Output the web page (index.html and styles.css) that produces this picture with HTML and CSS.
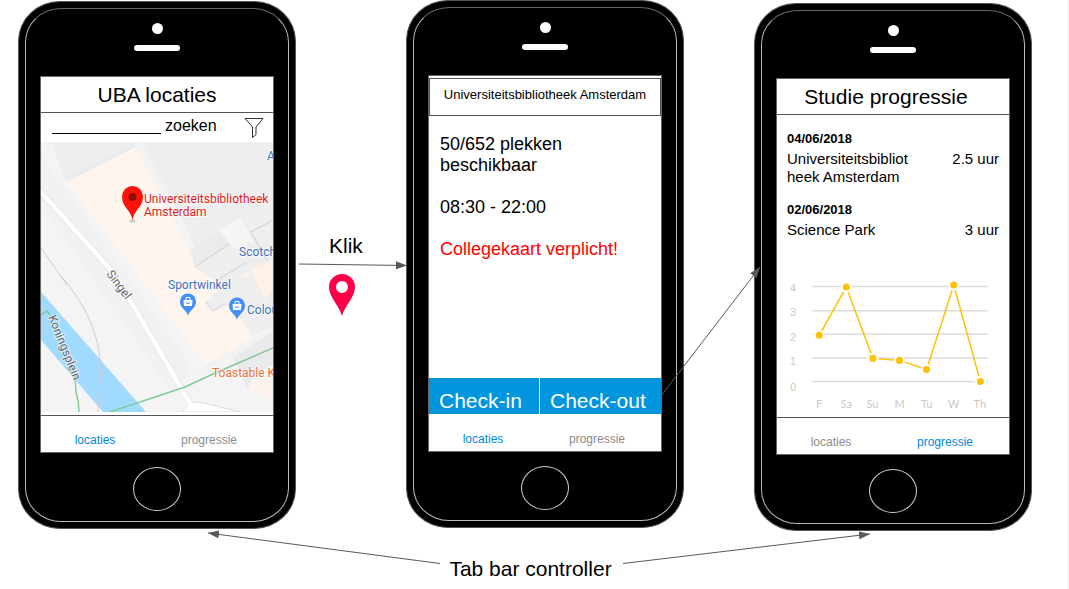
FILE: index.html
```html
<!DOCTYPE html>
<html lang="nl">
<head>
<meta charset="utf-8">
<meta name="viewport" content="width=device-width, initial-scale=1">
<title>UBA locaties – schermen</title>
<link rel="stylesheet" href="styles.css">
</head>
<body>
<main class="board">
  <div class="flow">
    <section class="phone phone-locations">
      <span class="camera"></span>
      <span class="speaker"></span>
      <div class="screen">
        <h2 class="title">UBA locaties</h2>
        <form class="search">
          <input class="search-input" id="zoek" type="text">
          <label class="search-label" for="zoek">zoeken</label>
          <button class="filter" type="button" aria-label="Filter">
            <svg viewBox="0 0 20 22" width="20" height="22"><path d="M1 1.500H19L12 10V17.500L8.500 20.500V10Z"/></svg>
          </button>
        </form>
        <svg class="map" viewBox="0 0 232 270" role="img" aria-label="Kaart">
          <rect width="232" height="270" fill="#f4f4f4"/>
          <path d="M11 0H90L95 5 26 40 22 35Z" fill="#eee"/>
          <path d="M22 36 92 1 95 5 26 40Z" fill="#e9ebee"/>
          <path d="M0 12 149 223 134 254 0 62Z" fill="#f1f1f1"/>
          <path d="M100 0H232V78L154 104 148 92Z" fill="#eee"/>
          <path d="M96 0H101L154 104 149 110 95 5Z" fill="#f3f3f3"/>
          <path d="M149 110 187 87 205 77 232 64V188L154 126Z" fill="#eee"/>
          <path d="M26 40 95 5 149 110 154 126 187 146 206 130 232 155V185L165 223Z" fill="#fef5ee"/>
          <path d="M149 108 178 88 188 101 155 124Z" fill="#eaebed"/>
          <path d="M178 88 200 76 212 100 195 108Z" fill="#f5f5f5"/>
          <path d="M154 125 188 102M210 90 232 78M210 90 226 119M178 137 206 120" fill="none" stroke="#d5d7df" stroke-width="1.300"/>
          <path d="M165 160 188 138 232 128V184L211 194 190 163 173 169Z" fill="#eee"/>
          <path d="M165 160 172 169 184 161" fill="none" stroke="#dfe0e3" stroke-width="2"/>
          <path d="M209 128 232 117V145L225 158Z" fill="#fef1e8"/>
          <path d="M165 223 232 184V206L144 245Z" fill="#f2f2f2"/>
          <path d="M190 226 232 207V270H150L149 245Z" fill="#f4f4f4"/>
          <path d="M192 215 232 190V223L212 232 207 247Z" fill="#eaeaec"/>
          <path d="M207 246 232 222V259Z" fill="#fdf3ee"/>
          <path d="M0 150 105 270H62L0 198Z" fill="#a1daff"/>
          <path d="M0 106 26 143M19 133C43 160 56 188 59 217C61 235 57 252 57 270" fill="none" stroke="#ccc"/>
          <path d="M-2 48 69 127 86 153 149 261" fill="none" stroke="#e4e4e4" stroke-width="6"/>
          <path d="M141 270 149 261 158 260 200 270Z" fill="#fff" stroke="#ddd"/>
          <path d="M-2 48 69 127 86 153 150 263" fill="none" stroke="#fff" stroke-width="4.500"/>
          <path d="M69 270 144 245 172 232 232 206M0 173 6 169 9 173M34 233 35 250C38 260 38 265 38 270" fill="none" stroke="#7fca97" stroke-width="1.400"/>
          <g class="map-street">
            <text transform="translate(65 132) rotate(53)">Singel</text>
            <text transform="translate(7 175) rotate(68)">Koningsplein</text>
          </g>
          <g class="map-place">
            <text x="226" y="18">A</text>
            <text x="198" y="114">Scotch</text>
            <text x="127" y="147">Sportwinkel</text>
            <text x="206" y="172">Colou</text>
          </g>
          <text class="map-food" x="171" y="235">Toastable K</text>
          <g class="map-main"><text x="103" y="61">Universiteitsbibliotheek</text><text x="103" y="74">Amsterdam</text></g>
          <ellipse cx="91.500" cy="79" rx="3" ry="1.500" fill="#ccc"/>
          <path d="M91.500 79C91 68 81 66 81 54.500A10.500 10.500 0 0 1 102 54.500C102 66 92 68 91.500 79Z" fill="#fc1209"/>
          <circle cx="91.500" cy="55" r="4" fill="#970b06"/>
          <g id="shop">
            <path d="M147 174C146 168 139 167 139 159.500A8 8 0 0 1 155 159.500C155 167 148 168 147 174Z" fill="#4290f8"/>
            <path d="M142.500 158H151.500L151 164H143Z" fill="#fff"/>
            <path d="M145 158V155.500H149V158" fill="none" stroke="#fff"/>
            <path d="M145 160.500Q147 163 149 160.500" fill="none" stroke="#4290f8"/>
          </g>
          <use href="#shop" x="49" y="4"/>
        </svg>
        <nav class="tabs">
          <a class="tab tab-active" href="#locaties">locaties</a>
          <a class="tab" href="#progressie">progressie</a>
        </nav>
      </div>
      <button class="home" type="button" aria-label="Home"></button>
    </section>

    <div class="step">
      <span class="step-text">Klik</span>
      <svg class="step-pin" viewBox="0 0 26 42" width="26" height="42"><path fill-rule="evenodd" d="M13 42C10 31 0 23 0 13A13 13 0 0 1 26 13C26 23 16 31 13 42ZM13 7A6 6 0 1 0 13 19A6 6 0 1 0 13 7Z" fill="#ff0048"/></svg>
    </div>

    <section class="phone phone-detail">
      <span class="camera"></span>
      <span class="speaker"></span>
      <div class="screen">
        <h2 class="title title-small">Universiteitsbibliotheek Amsterdam</h2>
        <div class="details">
          <p>50/652 plekken beschikbaar</p>
          <p>08:30 - 22:00</p>
          <p class="warning">Collegekaart verplicht!</p>
        </div>
        <div class="actions">
          <button class="action" type="button">Check-in</button>
          <button class="action" type="button">Check-out</button>
        </div>
        <nav class="tabs tabs-plain">
          <a class="tab tab-active" href="#locaties">locaties</a>
          <a class="tab" href="#progressie">progressie</a>
        </nav>
      </div>
      <button class="home" type="button" aria-label="Home"></button>
    </section>

    <section class="phone phone-progress">
      <span class="camera"></span>
      <span class="speaker"></span>
      <div class="screen">
        <h2 class="title title-shift">Studie progressie</h2>
        <div class="log">
          <h3 class="date">04/06/2018</h3>
          <div class="entry"><span class="place">Universiteitsbibliotheek Amsterdam</span><span>2.5 uur</span></div>
          <h3 class="date">02/06/2018</h3>
          <div class="entry"><span class="place">Science Park</span><span>3 uur</span></div>
        </div>
        <svg class="chart" viewBox="0 0 231 146" role="img" aria-label="Uren per dag">
          <path d="M35 17.500H210M35 41.500H210M35 65H210M35 88.500H210M35 112H210" stroke="#dcdcdc" stroke-width="1.500"/>
          <path d="M42 66 69 18 95.500 89 122 91 149 100 176 16 202.500 112" fill="none" stroke="#ffc107" stroke-width="1.500"/>
          <g fill="#ffc107" stroke="#fff" stroke-width="2">
            <circle cx="42" cy="66" r="4.500"/><circle cx="69" cy="18" r="4.500"/><circle cx="95.500" cy="89" r="4.500"/><circle cx="122" cy="91" r="4.500"/><circle cx="149" cy="100" r="4.500"/><circle cx="176" cy="16" r="4.500"/><circle cx="202.500" cy="112" r="4.500"/>
          </g>
          <g class="chart-values"><text x="16" y="23">4</text><text x="16" y="47">3</text><text x="16" y="72">2</text><text x="16" y="96">1</text><text x="16" y="121">0</text></g>
          <g class="chart-days"><text x="42" y="138">F</text><text x="69" y="138">Sa</text><text x="95" y="138">Su</text><text x="122" y="138">M</text><text x="149" y="138">Tu</text><text x="176" y="138">W</text><text x="202" y="138">Th</text></g>
        </svg>
        <nav class="tabs">
          <a class="tab" href="#locaties">locaties</a>
          <a class="tab tab-active" href="#progressie">progressie</a>
        </nav>
      </div>
      <button class="home" type="button" aria-label="Home"></button>
    </section>
  </div>
  <p class="caption">Tab bar controller</p>
  <svg class="arrows" viewBox="0 0 1069 589" width="1069" height="589" aria-hidden="true">
    <defs><marker id="head" viewBox="0 0 11 8" refX="11" refY="4" markerWidth="11" markerHeight="8" markerUnits="userSpaceOnUse" orient="auto"><path d="M0 0 11 4 0 8Z" fill="#595959"/></marker></defs>
    <g fill="none" stroke="#595959">
      <path d="M299 264 407 265.500" marker-end="url(#head)"/>
      <path d="M661 396 760 267" marker-end="url(#head)"/>
      <path d="M440 563.500 208 533" marker-end="url(#head)"/>
      <path d="M623 563.500 870 534" marker-end="url(#head)"/>
    </g>
  </svg>
</main>
</body>
</html>
```
FILE: styles.css
```css
* {
  box-sizing: border-box;
}

body {
  margin: 0;
  background: #fff;
  color: #000;
  font-family: "Liberation Sans", Arial, sans-serif;
}

h2, h3, p {
  margin: 0;
}

button {
  padding: 0;
  font-family: inherit;
}

.board {
  position: relative;
  min-height: 100vh;
  border-right: 1px solid #eee;
}

.flow {
  display: flex;
  align-items: flex-start;
  padding-left: 18px;
}

/* Phone frame */
.phone {
  position: relative;
  flex: 0 0 278px;
  min-width: 0;
  display: flex;
  flex-direction: column;
  align-items: center;
  padding: 21px 21px 17px;
  border: 1px solid #555;
  border-radius: 42px / 40px;
  background: #000;
}

.phone::before {
  content: "";
  position: absolute;
  inset: 6px;
  border: 1px solid #bbb;
  border-top-color: #666;
  border-radius: 36px / 34px;
}

.phone-locations {
  margin-top: 1px;
}

.phone-progress {
  margin-top: 3px;
  margin-left: 70px;
}

.camera {
  width: 11px;
  height: 11px;
  border-radius: 50%;
  background: #fff;
}

.speaker {
  width: 46px;
  height: 6px;
  margin: 11px 0 25px;
  border-radius: 3px;
  background: #fff;
}

.home {
  width: 48px;
  height: 44px;
  margin-top: 14px;
  border: 1px solid #ccc;
  border-radius: 50%;
  background: #000;
}

/* Screen */
.screen {
  position: relative;
  align-self: stretch;
  display: flex;
  flex-direction: column;
  min-height: 377px;
  border: 1px solid #666;
  background: #fff;
}

.title {
  height: 36px;
  border-bottom: 1px solid #555;
  font-size: 21px;
  font-weight: 400;
  line-height: 36px;
  text-align: center;
}

.title-small {
  height: 38px;
  margin-top: 2px;
  border: 1px solid #555;
  font-size: 13px;
  line-height: 32px;
}

.title-shift {
  padding-right: 14px;
}

.tabs {
  display: grid;
  grid-template-columns: 9fr 10fr;
  margin-top: auto;
  padding: 16px 4px 4px 0;
  border-top: 1px solid #555;
}

.tabs-plain {
  margin-top: 0;
  border-top-color: #fff;
}

.tab {
  color: #8c8c8c;
  font-size: 12px;
  line-height: 16px;
  text-align: center;
  text-decoration: none;
}

.tab-active {
  color: #0089dc;
}

/* Locations */
.search {
  display: flex;
  align-items: flex-start;
  height: 29px;
  padding: 4px 9px 0 11px;
}

.search-input {
  width: 109px;
  height: 17px;
  padding: 0;
  border: 0;
  border-bottom: 1px solid #000;
  font-size: 16px;
}

.search-label {
  margin-left: 4px;
  font-size: 16px;
  line-height: 18px;
}

.filter {
  width: 20px;
  height: 22px;
  margin-left: auto;
  border: 0;
  background: none;
}

.filter svg {
  display: block;
  fill: none;
  stroke: #333;
}

.map {
  display: block;
  width: 100%;
  font-family: Roboto, sans-serif;
  font-size: 12px;
}

.map text {
  paint-order: stroke;
  stroke: #fff;
  stroke-opacity: 0.6;
  stroke-width: 2px;
}

.map-street {
  fill: #666;
}

.map-place {
  fill: #3f73bd;
}

.map-food {
  fill: #e8743f;
}

.map-main {
  fill: #dc1a1a;
}

/* Step between phones */
.step {
  flex: 0 0 110px;
  display: flex;
  flex-direction: column;
  align-items: flex-start;
  padding: 234px 0 0 33px;
}

.step-text {
  font-size: 21px;
  line-height: 24px;
}

.step-pin {
  margin-top: 16px;
}

/* Location detail */
.details {
  display: grid;
  grid-template-columns: minmax(0, 1fr);
  gap: 21px;
  padding: 18px 60px 0 11px;
  font-size: 18px;
  line-height: 21px;
}

.warning {
  color: #f00;
  white-space: nowrap;
}

.actions {
  display: grid;
  grid-template-columns: 110px 1fr;
  gap: 1px;
  margin-top: auto;
}

.action {
  height: 36px;
  padding: 9px 0 0 10px;
  border: 0;
  background: #0095dd;
  color: #fff;
  font-size: 21px;
  line-height: 24px;
  text-align: left;
}

/* Progress */
.log {
  padding: 15px 10px 0 10px;
  font-size: 15px;
  line-height: 18px;
}

.date {
  font-size: 13px;
  line-height: 18px;
}

.entry {
  display: flex;
  justify-content: space-between;
  align-items: flex-start;
  padding: 2px 0 15px;
}

.place {
  width: 124px;
  word-break: break-all;
}

.chart {
  display: block;
  position: absolute;
  bottom: 38px;
  width: 100%;
}

.chart text {
  fill: #c8c8c8;
  text-anchor: middle;
}

.chart-values {
  font-size: 11px;
}

.chart-days {
  font-family: Lato, sans-serif;
  font-size: 11px;
}

.caption {
  padding: 26px 7px 0 0;
  font-size: 21px;
  line-height: 24px;
  text-align: center;
}

/* Connectors run over the phones */
.arrows {
  position: absolute;
  top: 0;
  left: 0;
  pointer-events: none;
}
```
